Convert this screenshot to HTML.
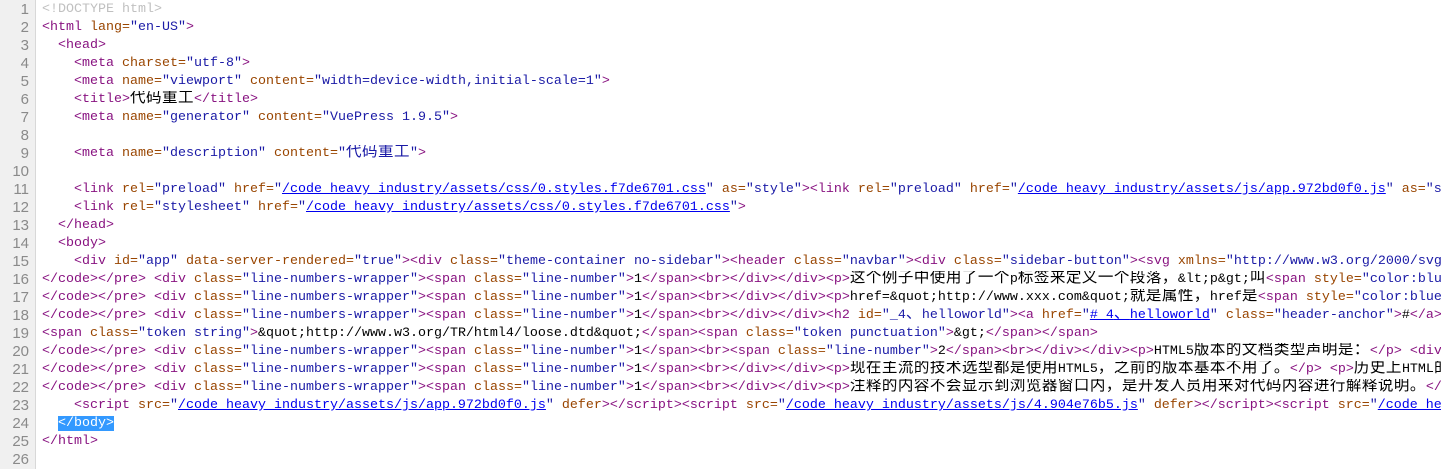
<!DOCTYPE html>
<html><head><meta charset="utf-8"><style>
body{margin:0;width:1441px;height:469px;overflow:hidden;background:#fff;font-family:"Liberation Mono","Noto Sans CJK SC",monospace;font-size:13.33px;}
.g{position:absolute;left:0;top:0;width:35px;height:469px;background:#f0f0f0;border-right:1px solid #d8d8d8;}
.r{position:absolute;left:0;height:18px;line-height:18px;width:1441px;white-space:pre;overflow:hidden;}
.n{display:inline-block;width:29px;text-align:right;color:#8a8a8a;font-family:"Liberation Sans",sans-serif;font-size:15px;}
.x{position:absolute;left:42px;top:0;height:18px;line-height:18px;overflow:hidden;display:block;}
.t{color:#881280}.a{color:#994500}.v{color:#1a1aa6}.l{color:#0000ee;text-decoration:underline}.d{color:#c0c0c0}
.c{font-family:"Noto Sans CJK SC",sans-serif;font-size:15.5px;line-height:0;letter-spacing:0.5px;}
.s{background:#3399ff;color:#fff}
</style></head><body>
<div class="g"></div>
<div class="r" style="top:1px"><span class="n">1</span><span class="x"><span class="d">&lt;!DOCTYPE html&gt;</span></span></div>
<div class="r" style="top:19px"><span class="n">2</span><span class="x"><span class="t">&lt;html </span><span class="a">lang=</span><span class="v">"en-US"</span><span class="t">&gt;</span></span></div>
<div class="r" style="top:37px"><span class="n">3</span><span class="x">  <span class="t">&lt;head&gt;</span></span></div>
<div class="r" style="top:55px"><span class="n">4</span><span class="x">    <span class="t">&lt;meta </span><span class="a">charset=</span><span class="v">"utf-8"</span><span class="t">&gt;</span></span></div>
<div class="r" style="top:73px"><span class="n">5</span><span class="x">    <span class="t">&lt;meta </span><span class="a">name=</span><span class="v">"viewport"</span> <span class="a">content=</span><span class="v">"width=device-width,initial-scale=1"</span><span class="t">&gt;</span></span></div>
<div class="r" style="top:91px"><span class="n">6</span><span class="x">    <span class="t">&lt;title&gt;</span><span class="c">代码重工</span><span class="t">&lt;/title&gt;</span></span></div>
<div class="r" style="top:109px"><span class="n">7</span><span class="x">    <span class="t">&lt;meta </span><span class="a">name=</span><span class="v">"generator"</span> <span class="a">content=</span><span class="v">"VuePress 1.9.5"</span><span class="t">&gt;</span></span></div>
<div class="r" style="top:127px"><span class="n">8</span></div>
<div class="r" style="top:145px"><span class="n">9</span><span class="x">    <span class="t">&lt;meta </span><span class="a">name=</span><span class="v">"description"</span> <span class="a">content=</span><span class="v">"<span class="c">代码重工</span>"</span><span class="t">&gt;</span></span></div>
<div class="r" style="top:163px"><span class="n">10</span></div>
<div class="r" style="top:181px"><span class="n">11</span><span class="x">    <span class="t">&lt;link </span><span class="a">rel=</span><span class="v">"preload"</span> <span class="a">href=</span><span class="v">"<span class="l">/code_heavy_industry/assets/css/0.styles.f7de6701.css</span>"</span> <span class="a">as=</span><span class="v">"style"</span><span class="t">&gt;&lt;link </span><span class="a">rel=</span><span class="v">"preload"</span> <span class="a">href=</span><span class="v">"<span class="l">/code_heavy_industry/assets/js/app.972bd0f0.js</span>"</span> <span class="a">as=</span><span class="v">"script"</span></span></div>
<div class="r" style="top:199px"><span class="n">12</span><span class="x">    <span class="t">&lt;link </span><span class="a">rel=</span><span class="v">"stylesheet"</span> <span class="a">href=</span><span class="v">"<span class="l">/code_heavy_industry/assets/css/0.styles.f7de6701.css</span>"</span><span class="t">&gt;</span></span></div>
<div class="r" style="top:217px"><span class="n">13</span><span class="x">  <span class="t">&lt;/head&gt;</span></span></div>
<div class="r" style="top:235px"><span class="n">14</span><span class="x">  <span class="t">&lt;body&gt;</span></span></div>
<div class="r" style="top:253px"><span class="n">15</span><span class="x">    <span class="t">&lt;div </span><span class="a">id=</span><span class="v">"app"</span> <span class="a">data-server-rendered=</span><span class="v">"true"</span><span class="t">&gt;&lt;div </span><span class="a">class=</span><span class="v">"theme-container no-sidebar"</span><span class="t">&gt;&lt;header </span><span class="a">class=</span><span class="v">"navbar"</span><span class="t">&gt;&lt;div </span><span class="a">class=</span><span class="v">"sidebar-button"</span><span class="t">&gt;&lt;svg </span><span class="a">xmlns=</span><span class="v">"http://www.w3.org/2000/svg"</span></span></div>
<div class="r" style="top:271px"><span class="n">16</span><span class="x"><span class="t">&lt;/code&gt;&lt;/pre&gt;</span> <span class="t">&lt;div </span><span class="a">class=</span><span class="v">"line-numbers-wrapper"</span><span class="t">&gt;&lt;span </span><span class="a">class=</span><span class="v">"line-number"</span><span class="t">&gt;</span>1<span class="t">&lt;/span&gt;&lt;br&gt;&lt;/div&gt;&lt;/div&gt;&lt;p&gt;</span><span class="c">这个例子中使用了一个</span>p<span class="c">标签来定义一个段落，</span>&amp;lt;p&amp;gt;<span class="c">叫</span><span class="t">&lt;span </span><span class="a">style=</span><span class="v">"color:blue"</span></span></div>
<div class="r" style="top:289px"><span class="n">17</span><span class="x"><span class="t">&lt;/code&gt;&lt;/pre&gt;</span> <span class="t">&lt;div </span><span class="a">class=</span><span class="v">"line-numbers-wrapper"</span><span class="t">&gt;&lt;span </span><span class="a">class=</span><span class="v">"line-number"</span><span class="t">&gt;</span>1<span class="t">&lt;/span&gt;&lt;br&gt;&lt;/div&gt;&lt;/div&gt;&lt;p&gt;</span>href=&amp;quot;http://www.xxx.com&amp;quot;<span class="c">就是属性，</span>href<span class="c">是</span><span class="t">&lt;span </span><span class="a">style=</span><span class="v">"color:blue"</span></span></div>
<div class="r" style="top:307px"><span class="n">18</span><span class="x"><span class="t">&lt;/code&gt;&lt;/pre&gt;</span> <span class="t">&lt;div </span><span class="a">class=</span><span class="v">"line-numbers-wrapper"</span><span class="t">&gt;&lt;span </span><span class="a">class=</span><span class="v">"line-number"</span><span class="t">&gt;</span>1<span class="t">&lt;/span&gt;&lt;br&gt;&lt;/div&gt;&lt;/div&gt;&lt;h2 </span><span class="a">id=</span><span class="v">"_4<span class="c">、</span>helloworld"</span><span class="t">&gt;&lt;a </span><span class="a">href=</span><span class="v">"<span class="l">#_4<span class="c">、</span>helloworld</span>"</span> <span class="a">class=</span><span class="v">"header-anchor"</span><span class="t">&gt;</span>#<span class="t">&lt;/a&gt;</span></span></div>
<div class="r" style="top:325px"><span class="n">19</span><span class="x"><span class="t">&lt;span </span><span class="a">class=</span><span class="v">"token string"</span><span class="t">&gt;</span>&amp;quot;http://www.w3.org/TR/html4/loose.dtd&amp;quot;<span class="t">&lt;/span&gt;&lt;span </span><span class="a">class=</span><span class="v">"token punctuation"</span><span class="t">&gt;</span>&amp;gt;<span class="t">&lt;/span&gt;&lt;/span&gt;</span></span></div>
<div class="r" style="top:343px"><span class="n">20</span><span class="x"><span class="t">&lt;/code&gt;&lt;/pre&gt;</span> <span class="t">&lt;div </span><span class="a">class=</span><span class="v">"line-numbers-wrapper"</span><span class="t">&gt;&lt;span </span><span class="a">class=</span><span class="v">"line-number"</span><span class="t">&gt;</span>1<span class="t">&lt;/span&gt;&lt;br&gt;&lt;span </span><span class="a">class=</span><span class="v">"line-number"</span><span class="t">&gt;</span>2<span class="t">&lt;/span&gt;&lt;br&gt;&lt;/div&gt;&lt;/div&gt;&lt;p&gt;</span>HTML5<span class="c">版本的文档类型声明是：</span><span class="t">&lt;/p&gt;</span> <span class="t">&lt;div</span></span></div>
<div class="r" style="top:361px"><span class="n">21</span><span class="x"><span class="t">&lt;/code&gt;&lt;/pre&gt;</span> <span class="t">&lt;div </span><span class="a">class=</span><span class="v">"line-numbers-wrapper"</span><span class="t">&gt;&lt;span </span><span class="a">class=</span><span class="v">"line-number"</span><span class="t">&gt;</span>1<span class="t">&lt;/span&gt;&lt;br&gt;&lt;/div&gt;&lt;/div&gt;&lt;p&gt;</span><span class="c">现在主流的技术选型都是使用</span>HTML5<span class="c">，之前的版本基本不用了。</span><span class="t">&lt;/p&gt;</span> <span class="t">&lt;p&gt;</span><span class="c">历史上</span>HTML<span class="c">的</span></span></div>
<div class="r" style="top:379px"><span class="n">22</span><span class="x"><span class="t">&lt;/code&gt;&lt;/pre&gt;</span> <span class="t">&lt;div </span><span class="a">class=</span><span class="v">"line-numbers-wrapper"</span><span class="t">&gt;&lt;span </span><span class="a">class=</span><span class="v">"line-number"</span><span class="t">&gt;</span>1<span class="t">&lt;/span&gt;&lt;br&gt;&lt;/div&gt;&lt;/div&gt;&lt;p&gt;</span><span class="c">注释的内容不会显示到浏览器窗口内，是开发人员用来对代码内容进行解释说明。</span><span class="t">&lt;/p&gt;</span></span></div>
<div class="r" style="top:397px"><span class="n">23</span><span class="x">    <span class="t">&lt;script </span><span class="a">src=</span><span class="v">"<span class="l">/code_heavy_industry/assets/js/app.972bd0f0.js</span>"</span> <span class="a">defer</span><span class="t">&gt;&lt;/script&gt;&lt;script </span><span class="a">src=</span><span class="v">"<span class="l">/code_heavy_industry/assets/js/4.904e76b5.js</span>"</span> <span class="a">defer</span><span class="t">&gt;&lt;/script&gt;&lt;script </span><span class="a">src=</span><span class="v">"<span class="l">/code_heavy_industry/assets/js/</span>"</span></span></div>
<div class="r" style="top:415px"><span class="n">24</span><span class="x">  <span class="s">&lt;/body&gt;</span></span></div>
<div class="r" style="top:433px"><span class="n">25</span><span class="x"><span class="t">&lt;/html&gt;</span></span></div>
<div class="r" style="top:451px"><span class="n">26</span></div>
</body></html>
